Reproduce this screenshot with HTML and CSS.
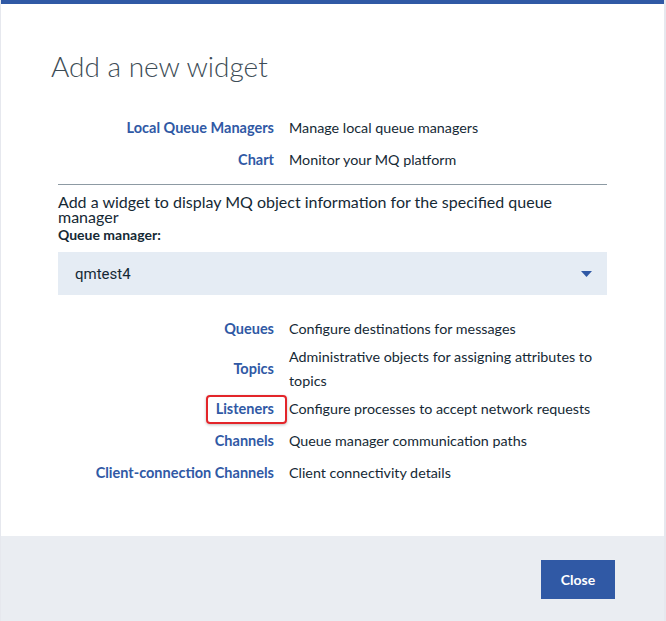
FILE: index.html
```html
<!DOCTYPE html>
<html>
<head>
<meta charset="utf-8">
<title>Add a new widget</title>
<link rel="stylesheet" href="styles.css">
</head>
<body>
<div class="page">
  <div class="modal">
    <div class="modal-body">
      <h1 class="title">Add a new widget</h1>
      <div class="rows">
        <div class="label">Local Queue Managers</div>
        <div class="desc">Manage local queue managers</div>
        <div class="label">Chart</div>
        <div class="desc">Monitor your MQ platform</div>
      </div>
      <hr class="divider">
      <p class="intro">Add a widget to display MQ object information for the specified queue manager</p>
      <div class="field-label">Queue manager:</div>
      <div class="select">
        <span class="select-value">qmtest4</span>
        <svg class="caret" width="11" height="6" viewBox="0 0 11 6"><path d="M0 0H11L5.5 6Z" fill="#3059a5"/></svg>
      </div>
      <div class="rows rows-objects">
        <div class="label">Queues</div>
        <div class="desc">Configure destinations for messages</div>
        <div class="label">Topics</div>
        <div class="desc">Administrative objects for assigning attributes to topics</div>
        <div class="label label-highlight">Listeners<span class="highlight"></span></div>
        <div class="desc">Configure processes to accept network requests</div>
        <div class="label">Channels</div>
        <div class="desc">Queue manager communication paths</div>
        <div class="label">Client-connection Channels</div>
        <div class="desc">Client connectivity details</div>
      </div>
    </div>
    <div class="modal-footer">
      <button class="btn-primary">Close</button>
    </div>
  </div>
</div>
</body>
</html>
```

FILE: styles.css
```css
html, body {
  margin: 0;
  padding: 0;
  height: 100%;
  overflow: hidden;
}
body {
  background: #e6e8ee;
  font-family: Lato, "Open Sans", sans-serif;
  color: #152935;
}
.page {
  padding-left: 1px;
  width: 663px;
}
.modal {
  background: #ffffff;
  border-top: 4px solid #3059a5;
  display: flex;
  flex-direction: column;
}
.modal-body {
  padding: 44px 57px 47px 57px;
}
.title {
  margin: 0 0 0 -7px;
  font-size: 28px;
  font-weight: 300;
  line-height: 36px;
  color: #3d4c56;
}
.rows {
  display: grid;
  grid-template-columns: 216px 319px;
  column-gap: 15px;
  margin-top: 28px;
  font-size: 14.3px;
}
.label {
  text-align: right;
  font-weight: 700;
  font-size: 14.5px;
  color: #3059a5;
  line-height: 24px;
  padding: 4px 0;
  align-self: center;
}
.desc {
  line-height: 24px;
  align-self: center;
  color: #152935;
}
.label-highlight {
  position: relative;
}
.highlight {
  position: absolute;
  right: -13px;
  top: 2px;
  width: 77px;
  height: 25px;
  border: 2px solid #e3252a;
  border-radius: 4px;
  box-shadow: 0 1px 3px rgba(0, 0, 0, 0.25);
}
.divider {
  margin: 8px 0 0 0;
  border: 0;
  border-top: 1px solid #8d9aa3;
  height: 0;
}
.intro {
  margin: 9px 0 0 0;
  font-size: 16px;
  line-height: 15px;
}
.field-label {
  margin-top: 3px;
  font-size: 14px;
  font-weight: 700;
  line-height: 16px;
}
.select {
  margin-top: 9px;
  height: 43px;
  background: #e5ecf4;
  display: flex;
  align-items: center;
  justify-content: space-between;
  padding: 0 15px 0 17px;
}
.select-value {
  font-family: Roboto, sans-serif;
  font-size: 15px;
  color: #152935;
}
.rows-objects {
  margin-top: 18px;
}
.modal-footer {
  box-sizing: border-box;
  background: #eaedf2;
  height: 85px;
  display: flex;
  justify-content: flex-end;
  align-items: flex-start;
  padding: 24px 49px 0 0;
}
.btn-primary {
  width: 74px;
  height: 39px;
  border: 0;
  background: #3059a5;
  color: #ffffff;
  font-family: Lato, sans-serif;
  font-weight: 700;
  font-size: 14px;
  padding: 0;
}
```
